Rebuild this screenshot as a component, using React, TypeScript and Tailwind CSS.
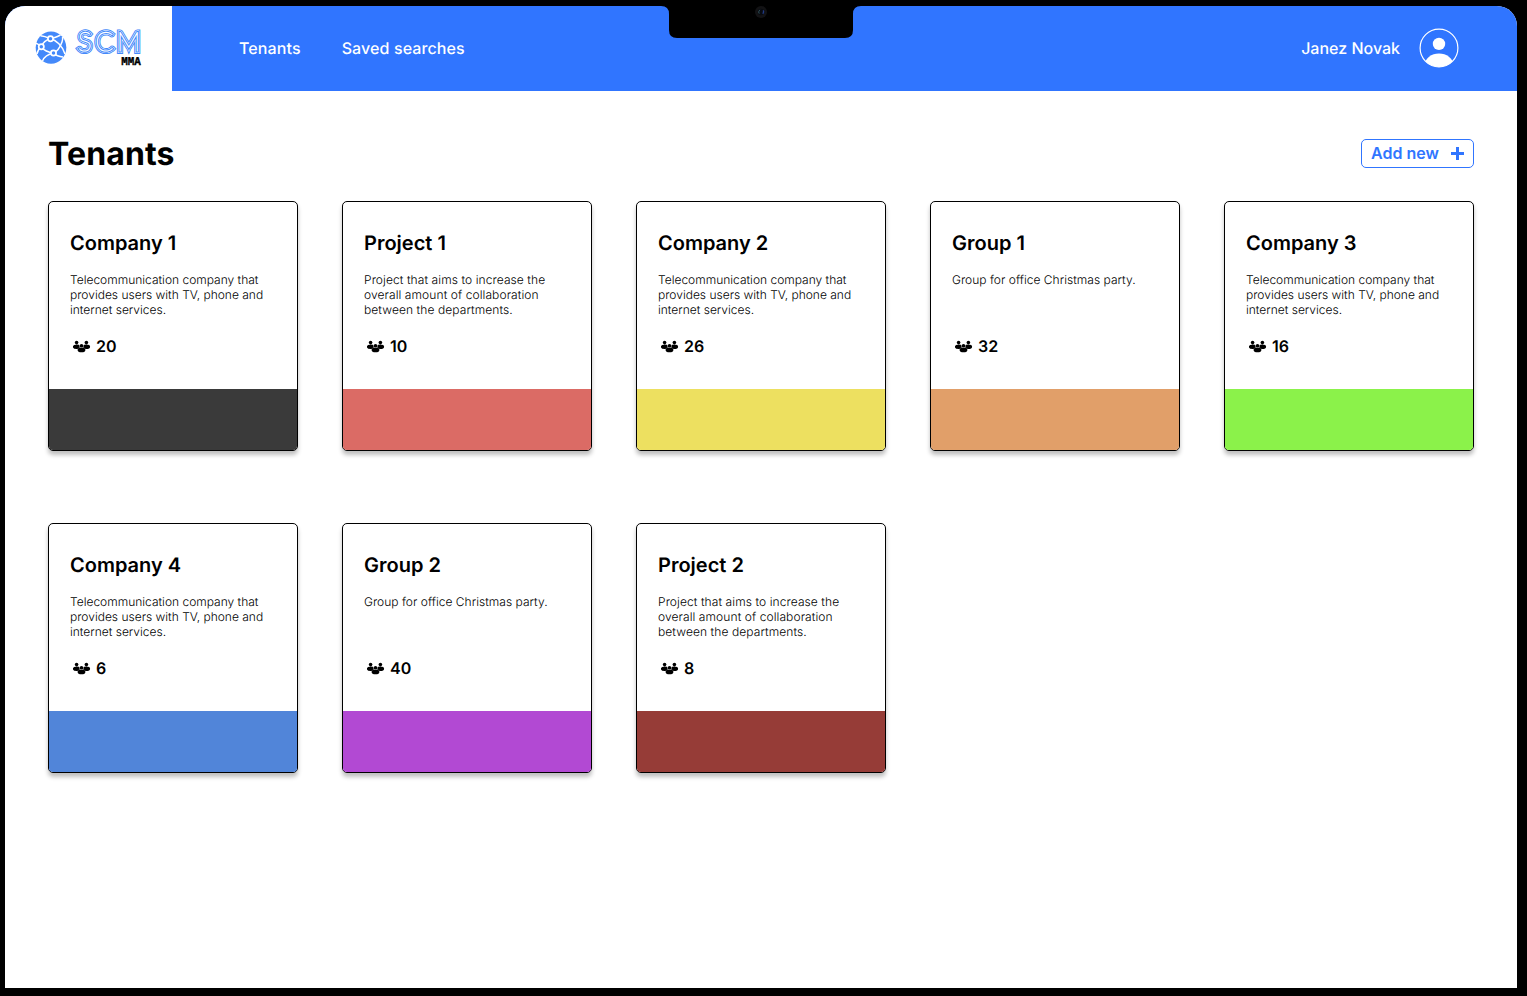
const TELECOM = 'Telecommunication company that provides users with TV, phone and internet services.';
const PROJECT = 'Project that aims to increase the overall amount of collaboration between the departments.';
const PARTY = 'Group for office Christmas party.';

interface Tenant {
  name: string;
  description: string;
  members: number;
  color: string;
  tracking: string;
}

const tenants: Tenant[] = [
  { name: 'Company 1', description: TELECOM, members: 20, color: 'bg-[#3a3a3a]', tracking: 'tracking-normal' },
  { name: 'Project 1', description: PROJECT, members: 10, color: 'bg-[#db6b65]', tracking: 'tracking-[0.09px]' },
  { name: 'Company 2', description: TELECOM, members: 26, color: 'bg-[#ede060]', tracking: 'tracking-normal' },
  { name: 'Group 1', description: PARTY, members: 32, color: 'bg-[#e19f69]', tracking: 'tracking-[0.03px]' },
  { name: 'Company 3', description: TELECOM, members: 16, color: 'bg-[#8bf24a]', tracking: 'tracking-normal' },
  { name: 'Company 4', description: TELECOM, members: 6, color: 'bg-[#5185d9]', tracking: 'tracking-normal' },
  { name: 'Group 2', description: PARTY, members: 40, color: 'bg-[#b249d3]', tracking: 'tracking-[0.03px]' },
  { name: 'Project 2', description: PROJECT, members: 8, color: 'bg-[#963c37]', tracking: 'tracking-[0.09px]' },
];

function Globe() {
  return (
    <svg width="32" height="34" viewBox="0 0 32 34" fill="none" aria-hidden="true">
      <ellipse cx="16" cy="17.6" rx="15.3" ry="16.2" fill="#4489fa" />
      <g stroke="#fff" strokeWidth="1.5">
        <path d="M5.5 5.8 C8 6 11 6.8 15.5 8.7 C19 8.2 22.5 6.5 25.5 5" />
        <path d="M15.5 8.7 C12 9.5 8 12 6.3 16.8 C4.5 18 2.5 21 2 24" />
        <path d="M6.3 16.8 C9 20.5 13 22.5 18.5 23 C22 21.5 25 17.5 27 12 C27.7 10 27.8 8 27.5 7" />
        <path d="M15.5 8.7 C21 10 27.5 16 30 24" />
        <path d="M18.5 23 C14 24 9 27 7.5 31" />
        <path d="M18.5 23 C20.5 25 22.5 26.5 28 27" />
        <path d="M6.3 16.8 C4 14.5 2.5 13.5 1 13.5" />
      </g>
      <g fill="#4489fa" stroke="#fff" strokeWidth="1.7">
        <circle cx="15.5" cy="8.7" r="2.6" />
        <circle cx="6.3" cy="16.8" r="2.6" />
        <circle cx="18.5" cy="23" r="2.6" />
      </g>
    </svg>
  );
}

function Logo() {
  const strokes = [
    { color: '#4489fa', width: 5.8 },
    { color: '#ffffff', width: 3.8 },
    { color: '#4489fa', width: 2.9 },
    { color: '#ffffff', width: 0.8 },
  ];
  return (
    <div className="flex h-[85px] w-[167px] items-start bg-white pt-[24px] pl-[30px]">
      <Globe />
      <svg className="ml-[8px] -mt-[14px]" width="74" height="60" viewBox="0 -10 74 60">
        {strokes.map((s, i) => (
          <text
            key={s.width}
            aria-hidden={i > 0}
            x="2.8"
            y="24.9"
            textLength="62.5"
            fontFamily="Lato, sans-serif"
            fontWeight="100"
            fontSize="26.5"
            fill="none"
            stroke={s.color}
            strokeWidth={s.width}
          >
            SCM
          </text>
        ))}
        <text
          x="46.3"
          y="39.3"
          textLength="19.6"
          lengthAdjust="spacingAndGlyphs"
          fontFamily="Liberation Mono, monospace"
          fontWeight="700"
          fontSize="12"
          stroke="#000"
          strokeWidth="0.4"
        >
          MMA
        </text>
      </svg>
    </div>
  );
}

function Notch() {
  return (
    <div className="absolute top-0 left-[661px] h-[38px] w-[200px]">
      <svg width="200" height="38" viewBox="0 0 200 38" aria-hidden="true">
        <path d="M0 0 V6 Q8 6 8 14 V30 Q8 38 16 38 H184 Q192 38 192 30 V14 Q192 6 200 6 V0 Z" fill="#000" />
        <circle cx="100" cy="12" r="6" fill="#121214" />
        <circle cx="100" cy="12" r="3.2" fill="#080a10" />
        <path d="M98.8 9.8 Q96.8 12 98.2 13.6" stroke="#32545c" fill="none" />
        <path d="M101.8 13.8 Q103.2 12 102.2 10.4" stroke="#203b86" strokeWidth="1.4" fill="none" />
      </svg>
    </div>
  );
}

function Avatar() {
  return (
    <svg width="40" height="40" viewBox="0 0 40 40" aria-hidden="true">
      <defs>
        <clipPath id="avatar-clip">
          <circle cx="20" cy="20" r="19" />
        </clipPath>
      </defs>
      <circle cx="20" cy="20" r="18.9" fill="none" stroke="#fff" strokeWidth="1.2" />
      <circle cx="20" cy="15.9" r="6.2" fill="#fff" />
      <ellipse cx="20" cy="36.5" rx="14" ry="11" fill="#fff" clipPath="url(#avatar-clip)" />
    </svg>
  );
}

function People() {
  return (
    <svg width="18" height="13" viewBox="0 0 18 13" aria-hidden="true">
      <circle cx="3.6" cy="2.6" r="1.8" />
      <circle cx="13.4" cy="2.6" r="1.8" />
      <ellipse cx="3.8" cy="6.7" rx="3.9" ry="2.3" />
      <ellipse cx="13.2" cy="6.7" rx="3.9" ry="2.3" />
      <circle cx="8.5" cy="5.7" r="2.2" fill="#fff" />
      <circle cx="8.5" cy="5.9" r="1.8" />
      <ellipse cx="8.5" cy="9.8" rx="4" ry="2.5" fill="#fff" />
      <ellipse cx="8.5" cy="9.9" rx="3.9" ry="2.4" />
    </svg>
  );
}

function TenantCard({ tenant }: { tenant: Tenant }) {
  return (
    <article className="flex h-[250px] flex-col overflow-hidden rounded-[5px] border border-black bg-white shadow-[0_4px_4px_rgba(0,0,0,0.25)]">
      <div className="flex h-[187px] flex-col pt-[29px] pr-[20px] pl-[21px]">
        <h2 className="text-[20px] leading-[24px] font-semibold">{tenant.name}</h2>
        <p className={`mt-[17px] h-[45px] text-[12px] leading-[15px] font-light ${tenant.tracking}`}>
          {tenant.description}
        </p>
        <div className="mt-[19px] flex h-[20px] items-center gap-[5px] pl-[3px]">
          <People />
          <span className="text-[16px] leading-[20px] font-semibold">{tenant.members}</span>
        </div>
      </div>
      <div className={`flex-1 ${tenant.color}`} />
    </article>
  );
}

export default function App() {
  return (
    <div className="relative h-[996px] w-[1527px] overflow-hidden bg-black pt-[6px] pl-[5px] font-['Inter',sans-serif] text-black [text-rendering:geometricPrecision]">
      <div className="h-[982px] w-[1512px] overflow-hidden rounded-t-[20px] bg-white">
        <header className="flex h-[85px] bg-[#3075ff] text-[16px] font-medium text-white">
          <Logo />
          <nav className="flex flex-1 items-center gap-[41px] pb-[2px] pl-[67px] tracking-[0.11px]">
            <a>Tenants</a>
            <a>Saved searches</a>
          </nav>
          <div className="flex items-center gap-[19px] pr-[58px] pb-[2px]">
            <span>Janez Novak</span>
            <Avatar />
          </div>
        </header>
        <main className="px-[43px] pt-[42px]">
          <div className="flex h-[40px] items-center justify-between">
            <h1 className="pt-[2px] text-[32px] leading-[40px] font-bold tracking-[0.12px]">Tenants</h1>
            <button className="flex h-[29px] w-[113px] items-center justify-between rounded-[5px] border border-[#3075ff] pr-[9px] pl-[9px] text-[16px] font-semibold text-[#3075ff]">
              Add new
              <svg width="13" height="13" viewBox="0 0 13 13" fill="#3075ff" aria-hidden="true">
                <path d="M5 0h3v5h5v3H8v5H5V8H0V5h5z" />
              </svg>
            </button>
          </div>
          <section className="mt-[28px] grid grid-cols-5 gap-x-[44px] gap-y-[72px]">
            {tenants.map((t) => (
              <TenantCard key={t.name} tenant={t} />
            ))}
          </section>
        </main>
      </div>
      <Notch />
    </div>
  );
}
